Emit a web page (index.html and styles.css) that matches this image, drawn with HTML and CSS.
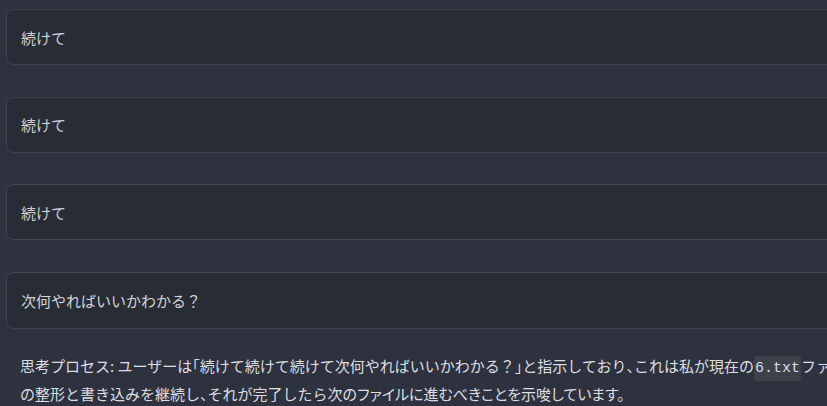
FILE: index.html
```html
<!DOCTYPE html>
<html lang="ja">
<head>
  <meta charset="UTF-8" />
  <meta name="viewport" content="width=device-width, initial-scale=1.0"/>
  <title>Chat</title>
  <link rel="stylesheet" href="styles.css">
</head>
<body>
  <div class="thread">
    <div class="msg-user">続けて</div>
    <div class="msg-user">続けて</div>
    <div class="msg-user">続けて</div>
    <div class="msg-user">次何やればいいかわかる？</div>
    <p class="msg-reply">思考プロセス: ユーザーは<span class="hw">「</span>続けて続けて続けて次何やればいいかわかる？<span class="hw">」</span>と指示しており<span class="hw">、</span>これは私が現在の<code>6.txt</code>ファイルの整形と書き込みを継続し<span class="hw">、</span>それが完了したら<span class="tight">次のファイルに進むべきことを示唆しています。</span></p>
  </div>
</body>
</html>
```

FILE: styles.css
```css
*{margin:0;padding:0;box-sizing:border-box;}
html,body{height:100%;overflow:hidden;}
body{background:#2e323e;color:#d3d5da;font-family:"Noto Sans CJK JP","Noto Sans",sans-serif;}
.thread{width:900px;padding:9px 0 0 6px;display:flex;flex-direction:column;gap:31.5px;}
.msg-user{height:56px;display:flex;align-items:center;padding:0 14px;background:#282c34;border:1px solid #40444f;border-radius:8px;font-size:15px;color:#d0d3d9;}
.msg-user:nth-child(4){height:57px;}
.msg-reply{width:864px;padding:0 0 0 14px;margin-top:-7px;font-size:15px;line-height:25px;color:#dcdee2;}
.hw{font-feature-settings:"halt";}
.tight{font-feature-settings:"palt";}
.msg-reply code{font-family:"Liberation Mono","DejaVu Sans Mono",monospace;font-size:15px;background:#3d414b;padding:4px 1px;border-radius:3px;}
```
